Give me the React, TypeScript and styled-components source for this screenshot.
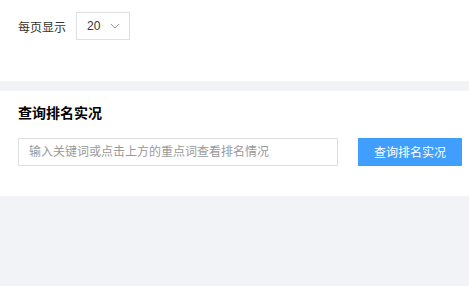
import React from 'react';
import styled, { createGlobalStyle } from 'styled-components';

const GlobalStyle = createGlobalStyle`
  html, body {
    margin: 0;
    padding: 0;
    background: #f2f3f7;
    font-family: 'Liberation Sans', 'Noto Sans CJK SC', sans-serif;
    color: #303133;
  }
`;

const Panel = styled.div<{ $height: number; $gap?: number }>`
  background: #fff;
  height: ${(p) => p.$height}px;
  box-sizing: border-box;
  padding: 12px 18px 0;
  margin-bottom: ${(p) => p.$gap ?? 0}px;
`;

const Row = styled.div<{ $gap: number }>`
  display: flex;
  align-items: center;
  gap: ${(p) => p.$gap}px;
  & > * {
    flex-shrink: 0;
  }
`;

const Label = styled.span`
  font-size: 12px;
  color: #333;
`;

const Select = styled.div`
  width: 54px;
  height: 28px;
  box-sizing: border-box;
  border: 1px solid #dcdfe6;
  display: flex;
  align-items: center;
  padding-left: 10px;
  gap: 10px;
  font-size: 12px;
  color: #333;
`;

const Title = styled.div`
  font-size: 14px;
  font-weight: bold;
  line-height: 20px;
  color: #000;
  margin-bottom: 15px;
`;

const Input = styled.input`
  width: 320px;
  height: 28px;
  box-sizing: border-box;
  border: 1px solid #dcdfe6;
  padding: 0 10px;
  font-family: inherit;
  font-size: 12px;
  outline: none;
  &::placeholder {
    color: #999;
  }
`;

const Button = styled.button`
  width: 104px;
  height: 28px;
  border: none;
  background: #409eff;
  color: #fff;
  font-family: inherit;
  font-size: 12px;
  margin-top: -1px;
  cursor: pointer;
`;

const Chevron = () => (
  <svg width="10" height="6" viewBox="0 0 10 6" fill="none">
    <path d="M1 1l4 4 4-4" stroke="#909399" strokeWidth="1" />
  </svg>
);

export default function App() {
  return (
    <>
      <GlobalStyle />
      <Panel $height={81} $gap={10}>
        <Row $gap={10}>
          <Label>每页显示</Label>
          <Select>
            <span>20</span>
            <Chevron />
          </Select>
        </Row>
      </Panel>
      <Panel $height={105}>
        <Title>查询排名实况</Title>
        <Row $gap={20}>
          <Input placeholder="输入关键词或点击上方的重点词查看排名情况" />
          <Button>查询排名实况</Button>
        </Row>
      </Panel>
    </>
  );
}
